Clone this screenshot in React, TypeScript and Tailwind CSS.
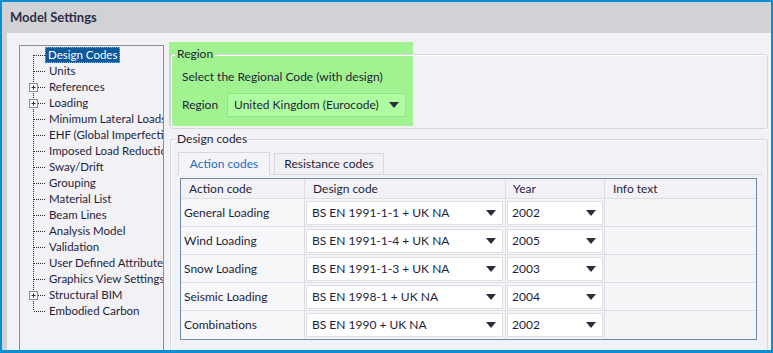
import React from 'react';

const font = { fontFamily: 'Lato, "Noto Sans", sans-serif' };

const treeItems = [
    { label: 'Design Codes', selected: true },
    { label: 'Units' },
    { label: 'References', plus: true },
    { label: 'Loading', plus: true },
    { label: 'Minimum Lateral Loads' },
    { label: 'EHF (Global Imperfections)' },
    { label: 'Imposed Load Reductions' },
    { label: 'Sway/Drift' },
    { label: 'Grouping' },
    { label: 'Material List' },
    { label: 'Beam Lines' },
    { label: 'Analysis Model' },
    { label: 'Validation' },
    { label: 'User Defined Attributes' },
    { label: 'Graphics View Settings' },
    { label: 'Structural BIM', plus: true },
    { label: 'Embodied Carbon' },
];

const rows = [
    { action: 'General Loading', code: 'BS EN 1991-1-1 + UK NA', year: '2002' },
    { action: 'Wind Loading', code: 'BS EN 1991-1-4 + UK NA', year: '2005' },
    { action: 'Snow Loading', code: 'BS EN 1991-1-3 + UK NA', year: '2003' },
    { action: 'Seismic Loading', code: 'BS EN 1998-1 + UK NA', year: '2004' },
    { action: 'Combinations', code: 'BS EN 1990 + UK NA', year: '2002' },
];

function Arrow() {
    return (
        <svg width="10" height="6" viewBox="0 0 10 6" className="shrink-0">
            <polygon points="0,0 10,0 5,6" fill="#2c2c3c" />
        </svg>
    );
}

function TreeConnector({ first, last, plus }: { first?: boolean; last?: boolean; plus?: boolean }) {
    const y1 = first ? 8 : 0;
    const y2 = last ? 8 : 16;
    return (
        <svg width="29" height="16" viewBox="0 0 29 16" className="shrink-0">
            <line x1="13.5" y1={y1} x2="13.5" y2={y2} stroke="#2a2a2a" strokeWidth="1" strokeDasharray="1 1" />
            <line x1="14" y1="8.5" x2="25" y2="8.5" stroke="#2a2a2a" strokeWidth="1" strokeDasharray="1 1" />
            {plus && (
                <>
                    <rect x="9.5" y="4.5" width="8" height="8" fill="#f7f7fa" stroke="#8c8c9a" />
                    <line x1="11.5" y1="8.5" x2="15.5" y2="8.5" stroke="#2a2a3a" />
                    <line x1="13.5" y1="6.5" x2="13.5" y2="10.5" stroke="#2a2a3a" />
                </>
            )}
        </svg>
    );
}

export default function App() {
    return (
        <div className="w-[773px] h-[353px] overflow-hidden bg-[#0a8fd2] pt-[2px] px-[2px] pb-[3px] text-[12px] text-[#1e1e3a]" style={font}>
            <div className="flex flex-col h-full bg-[#d1d2d6]">
                <div className="h-[31px] flex items-center pl-[8px] text-[13px] font-bold text-[#2e2e46]">Model Settings</div>
                <div className="flex-1 min-h-0 ml-[5px] bg-[#f2f2f6] flex pl-[12px] pt-[9px] overflow-hidden">
                    {/* tree */}
                    <div className="mt-[3px] w-[145px] h-[400px] shrink-0 border border-[#8d8d95] pt-[1px] overflow-hidden text-[11.5px]">
                        {treeItems.map((item, i) => (
                            <div key={item.label} className="h-[16px] flex items-center whitespace-nowrap">
                                <TreeConnector first={i === 0} last={i === treeItems.length - 1} plus={item.plus} />
                                {item.selected ? (
                                    <span className="h-[16px] leading-[15px] px-[3px] -ml-[4px] bg-[#0c5a9c] text-white outline-1 outline-dotted outline-[#d8a050] -outline-offset-1">{item.label}</span>
                                ) : (
                                    <span className="leading-[16px]">{item.label}</span>
                                )}
                            </div>
                        ))}
                    </div>

                    {/* right side */}
                    <div className="ml-[5px] w-[600px] shrink-0 flex flex-col">
                        {/* Region group */}
                        <div className="relative h-[87px]">
                            <div className="absolute left-0 top-0 w-[244px] h-[84px] bg-[#a1f391]" />
                            <div className="absolute top-[12px] left-[1px] right-[1px] bottom-0 rounded-[3px] border border-[#d3d8dc] shadow-[inset_1px_1px_0_#ffffff]" />
                            <div className="relative flex flex-col">
                                <div className="mt-[4px] ml-[6px] self-start px-[2px] leading-[16px] bg-[#a1f391]">Region</div>
                                <div className="mt-[7px] ml-[13px] leading-[16px]">Select the Regional Code (with design)</div>
                                <div className="mt-[8px] flex items-center">
                                    <span className="ml-[13px] w-[45px]">Region</span>
                                    <div className="w-[179px] h-[24px] flex items-center justify-between pl-[6px] pr-[6px] bg-[#aefda0] border border-[#97e286]">
                                        <span>United Kingdom (Eurocode)</span>
                                        <Arrow />
                                    </div>
                                </div>
                            </div>
                        </div>

                        {/* Design codes group */}
                        <div className="relative mt-[2px] flex-1">
                            <div className="absolute top-[8px] left-[1px] right-[1px] -bottom-[20px] rounded-[3px] border border-[#d3d8dc] shadow-[inset_1px_1px_0_#ffffff]" />
                            <div className="relative flex flex-col">
                                <div className="ml-[6px] self-start px-[2px] leading-[16px] bg-[#f2f2f6]">Design codes</div>
                                {/* tabs */}
                                <div className="mt-[4px] ml-[9px] flex items-end gap-[4px] h-[23px]">
                                    <div className="h-[23px] w-[92px] flex items-center justify-center border border-b-0 border-[#d6d6de] bg-[#f4f4f8] text-[#1f6cbc] relative top-[1px]">Action codes</div>
                                    <div className="h-[21px] w-[110px] flex items-center justify-center border border-b-0 border-[#d6d6de] bg-[#f1f1f5]">Resistance codes</div>
                                </div>
                                {/* panel */}
                                <div className="mx-[7px] border-t border-[#d6d6de] pl-[4px] pt-[3px]">
                                    <div className="w-[577px] border border-[#6f8aa8] bg-[#f6f6f9]">
                                        <div className="grid grid-cols-[124px_201px_99px_151px] h-[20px] border-b border-[#dcdce3] bg-[#f2f2f6]">
                                            <div className="pl-[8px] flex items-center border-r border-[#dcdce3]">Action code</div>
                                            <div className="pl-[8px] flex items-center border-r border-[#dcdce3]">Design code</div>
                                            <div className="pl-[7px] flex items-center border-r border-[#dcdce3]">Year</div>
                                            <div className="pl-[8px] flex items-center">Info text</div>
                                        </div>
                                        {rows.map((r, i) => (
                                            <div key={r.action} className={`grid grid-cols-[124px_201px_99px_151px] h-[28px] ${i < rows.length - 1 ? 'border-b border-[#dcdce3]' : ''}`}>
                                                <div className="pl-[3px] flex items-center border-r border-[#dcdce3] bg-[#f7f7fa]">{r.action}</div>
                                                <div className="px-[2px] pl-[1px] flex items-center border-r border-[#dcdce3]">
                                                    <div className="w-full h-[24px] flex items-center justify-between pl-[5px] pr-[6px] bg-white border border-[#dedee6]">
                                                        <span>{r.code}</span>
                                                        <Arrow />
                                                    </div>
                                                </div>
                                                <div className="px-[1px] flex items-center border-r border-[#dcdce3]">
                                                    <div className="w-full h-[24px] flex items-center justify-between pl-[4px] pr-[6px] bg-white border border-[#dedee6]">
                                                        <span>{r.year}</span>
                                                        <Arrow />
                                                    </div>
                                                </div>
                                                <div className="bg-[#f5f5f8]" />
                                            </div>
                                        ))}
                                    </div>
                                </div>
                            </div>
                        </div>
                    </div>
                </div>
            </div>
        </div>
    );
}
